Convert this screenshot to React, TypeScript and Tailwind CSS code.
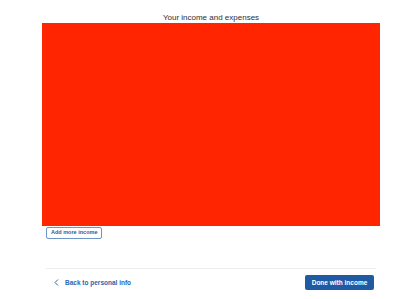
export default function App() {
  return (
    <div className="w-[400px] h-[299px] bg-white pl-[42px] pr-[20px] pt-[12px] font-['Liberation_Sans',Arial,sans-serif] overflow-hidden">
      <h1 className="text-center text-[8px] leading-[11px] text-[#2c2d30]">Your income and expenses</h1>
      <div className="h-[203px] bg-[#ff2500]" />
      <button className="block ml-[4px] mt-[1px] h-[12px] px-[4px] border border-[#6d95c8] rounded-[2px] text-[5.5px] font-bold text-[#2b5a97] leading-none">
        Add more income
      </button>
      <div className="mx-[4px] mt-[29px] border-t border-[#eceef1]" />
      <div className="flex items-center justify-between mx-[4px] mt-[6px]">
        <button className="flex items-center gap-[6px] pl-[8px] text-[6.5px] font-bold text-[#2d64b0]">
          <svg width="5" height="7" viewBox="0 0 5 7" fill="none" stroke="#2d64b0" strokeWidth="1">
            <path d="M4 0.5 L1 3.5 L4 6.5" />
          </svg>
          Back to personal info
        </button>
        <button className="mr-[2px] w-[69px] h-[15px] bg-[#1f5aa3] rounded-[2px] text-white text-[6.5px] font-bold">
          Done with income
        </button>
      </div>
    </div>
  );
}
